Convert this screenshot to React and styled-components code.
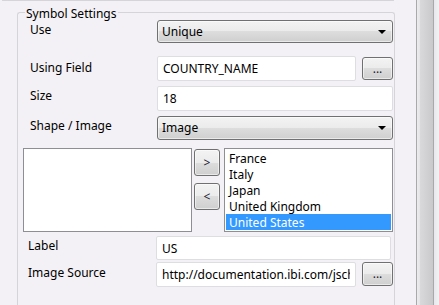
import React from "react";
import styled, { createGlobalStyle } from "styled-components";

const Global = createGlobalStyle`
  html, body { margin: 0; padding: 0; background: #f3f1f5; overflow: hidden; }
  body { font-family: "Noto Sans", "Segoe UI", sans-serif; font-size: 12px; color: #000; }
  * { box-sizing: border-box; }
`;

const BORDER = "#d5d5d9";

const Screen = styled.div`
  display: flex;
  width: 439px;
  height: 305px;
  overflow: hidden;
`;

const Main = styled.div`
  width: 416px;
  flex: none;
  display: flex;
  flex-direction: column;
`;

const ScrollTrack = styled.div`
  flex: 1;
  background: linear-gradient(
    to right,
    #a9a9ad 0,
    #a9a9ad 1px,
    #ececef 1px,
    #e4e4e7 4px,
    #d9d9dc 4px,
    #c9c9cc 17px,
    #a9a9ad 17px,
    #a9a9ad 18px,
    #e8e7eb 18px,
    #f2f1f4 100%
  );
`;

const PrevPanel = styled.div`
  margin-left: 2px;
  width: 392px;
  height: 2px;
  border: 1px solid ${BORDER};
  border-top: none;
  border-radius: 0 0 3px 3px;
`;

const Group = styled.section`
  margin: 3px 0 0 17px;
  width: 378px;
  display: flex;
  flex-direction: column;
`;

const GroupHeader = styled.div`
  display: flex;
  height: 16px;
`;

const HeaderCorner = styled.div`
  align-self: flex-end;
  height: 8px;
  width: ${(p) => (p.$grow ? "auto" : "8px")};
  flex: ${(p) => (p.$grow ? "1" : "none")};
  border-top: 1px solid ${BORDER};
  border-left: ${(p) => (p.$grow ? "none" : `1px solid ${BORDER}`)};
  border-right: ${(p) => (p.$grow ? `1px solid ${BORDER}` : "none")};
  border-radius: ${(p) => (p.$grow ? "0 3px 0 0" : "3px 0 0 0")};
`;

const GroupTitle = styled.div`
  flex: none;
  height: 16px;
  padding: 2px 2px 0 1px;
  line-height: 16px;
  white-space: nowrap;
`;

const Content = styled.div`
  display: flex;
  flex-direction: column;
  min-height: 320px;
  padding: 0 1px 0 5px;
  border: 1px solid ${BORDER};
  border-top: none;
  border-radius: 0 0 3px 3px;
`;

const Row = styled.div`
  display: flex;
  align-items: flex-start;
  margin-top: ${(p) => p.$mt || 0}px;
`;

const Label = styled.div`
  flex: none;
  width: ${(p) => p.$w}px;
  margin-left: ${(p) => p.$ml}px;
  padding-top: ${(p) => p.$pt || 0}px;
  line-height: 16px;
  white-space: nowrap;
`;

const Select = styled.div`
  flex: 1;
  height: ${(p) => p.$h}px;
  display: flex;
  align-items: center;
  padding-left: 4px;
  border: 1px solid #707070;
  border-radius: 3px;
  box-shadow: inset 0 0 0 1px rgba(255, 255, 255, 0.55);
  background: linear-gradient(to bottom, #f3f3f3 0%, #ebebeb 50%, #dddddd 50%, #cfcfcf 100%);
  line-height: 16px;
`;

const Arrow = styled.span`
  margin-left: auto;
  margin-right: 6px;
  width: 0;
  height: 0;
  border-left: 4px solid transparent;
  border-right: 4px solid transparent;
  border-top: 4px solid #000;
`;

const TextBox = styled.input`
  flex: 1;
  min-width: 0;
  height: ${(p) => p.$h || 25}px;
  margin: 0 ${(p) => p.$mr || 0}px 0 0;
  padding: 0 5px;
  border: 1px solid #dedee2;
  border-radius: 2px;
  background: #fff;
  font-family: "Noto Sans", "Segoe UI", sans-serif;
  font-size: 12px;
  color: #000;
  outline: none;
`;

const Button = styled.button`
  flex: none;
  width: ${(p) => p.$w}px;
  height: ${(p) => p.$h}px;
  margin: ${(p) => p.$mt || 0}px 0 0 ${(p) => p.$ml || 0}px;
  padding: 0;
  border: 1px solid #707070;
  border-radius: 3px;
  box-shadow: inset 0 0 0 1px rgba(255, 255, 255, 0.55);
  background: linear-gradient(to bottom, #f3f3f3 0%, #ebebeb 50%, #dddddd 50%, #cfcfcf 100%);
  font-family: "Noto Sans", "Segoe UI", sans-serif;
  font-size: 12px;
  line-height: 14px;
  color: #1b1b2e;
`;

const ListsRow = styled.div`
  display: flex;
  height: 84px;
  margin-top: 8px;
`;

const ListBox = styled.div`
  flex: ${(p) => (p.$w ? "none" : "1")};
  width: ${(p) => (p.$w ? `${p.$w}px` : "auto")};
  padding: 1px 1px 0 1px;
  border: 1px solid #8e8f94;
  background: #fff;
  overflow: hidden;
`;

const ListItem = styled.div`
  height: 16px;
  padding: 1px 0 0 3px;
  line-height: 16px;
  white-space: nowrap;
  background: ${(p) => (p.$sel ? "#3399ff" : "transparent")};
  color: ${(p) => (p.$sel ? "#fff" : "#000")};
`;

const MoveColumn = styled.div`
  flex: none;
  width: 26px;
  margin: 0 4px 0 2px;
  display: flex;
  flex-direction: column;
  gap: 7px;
  padding-top: 1px;
`;

const countries = ["France", "Italy", "Japan", "United Kingdom", "United States"];

export default function App() {
  return (
    <>
      <Global />
      <Screen>
        <Main>
          <PrevPanel />
          <Group>
            <GroupHeader>
              <HeaderCorner />
              <GroupTitle>Symbol Settings</GroupTitle>
              <HeaderCorner $grow />
            </GroupHeader>
            <Content>
              <Row>
                <Label $ml={7} $w={127} $pt={2}>Use</Label>
                <Select $h={23}>
                  Unique
                  <Arrow />
                </Select>
              </Row>
              <Row $mt={13}>
                <Label $ml={7} $w={127} $pt={4}>Using Field</Label>
                <TextBox readOnly value="COUNTRY_NAME" />
                <Button $w={31} $h={23} $mt={1} $ml={6}>...</Button>
              </Row>
              <Row $mt={5}>
                <Label $ml={7} $w={127} $pt={2}>Size</Label>
                <TextBox readOnly value="18" />
              </Row>
              <Row $mt={5}>
                <Label $ml={7} $w={127} $pt={2}>Shape / Image</Label>
                <Select $h={24}>
                  Image
                  <Arrow />
                </Select>
              </Row>
              <ListsRow>
                <ListBox $w={169} />
                <MoveColumn>
                  <Button $w={26} $h={27}>&gt;</Button>
                  <Button $w={26} $h={27}>&lt;</Button>
                </MoveColumn>
                <ListBox>
                  {countries.map((c) => (
                    <ListItem key={c} $sel={c === "United States"}>
                      {c}
                    </ListItem>
                  ))}
                </ListBox>
              </ListsRow>
              <Row $mt={4}>
                <Label $ml={5} $w={128} $pt={2}>Label</Label>
                <TextBox readOnly value="US" $h={24} $mr={2} />
              </Row>
              <Row $mt={2}>
                <Label $ml={5} $w={128} $pt={3}>Image Source</Label>
                <TextBox readOnly value="http://documentation.ibi.com/jschart/images/flags/us.png" />
                <Button $w={31} $h={24} $ml={6}>...</Button>
              </Row>
            </Content>
          </Group>
        </Main>
        <ScrollTrack />
      </Screen>
    </>
  );
}
